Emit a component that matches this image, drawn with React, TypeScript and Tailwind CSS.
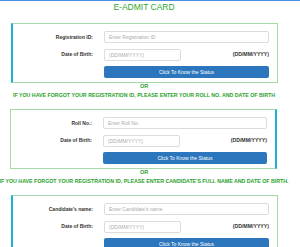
import React from 'react';

const font = { fontFamily: '"Liberation Sans", Arial, sans-serif' };

function Field({ placeholder, wide = true }: { placeholder: string; wide?: boolean }) {
  return (
    <input
      placeholder={placeholder}
      className={`${wide ? 'w-full' : 'w-[77px]'} block h-[12px] rounded-[2px] border border-[#dcdcdc] bg-white px-[4px] text-[5px] text-[#555] placeholder:text-[#aaa] outline-none`}
    />
  );
}

function Box({ label, placeholder, side }: { label: string; placeholder: string; side: 'left' | 'right' }) {
  const border =
    side === 'left'
      ? 'ml-[11px] border-l-2 border-l-[#1ab2d8]'
      : 'ml-[10px] border-r-2 border-r-[#1ab2d8]';
  const labelW = side === 'left' ? 'w-[80px]' : 'w-[81px]';
  return (
    <div className={`${border} w-[267px] border border-[#a8d9a8] pt-[7px] pb-[4px] pr-[8px] leading-[7px]`}>
      <div className="flex flex-col gap-[5.5px]">
        <div className="flex items-center">
          <div className={`${labelW} shrink-0 text-right text-[5px] font-bold text-[#333]`}>{label}</div>
          <div className="ml-[11px] flex flex-1"><Field placeholder={placeholder} /></div>
        </div>
        <div className="flex items-center">
          <div className={`${labelW} shrink-0 text-right text-[5px] font-bold text-[#333]`}>Date of Birth:</div>
          <div className="ml-[11px] flex flex-1 items-center justify-between">
            <Field placeholder="(DD/MM/YYYY)" wide={false} />
            <span className="text-[5.2px] font-bold text-[#333]">(DD/MM/YYYY)</span>
          </div>
        </div>
        <div className="flex">
          <div className={`${labelW} shrink-0`} />
          <button className="ml-[11px] block h-[12px] flex-1 rounded-[2px] bg-[#2b76bc] text-[5px] text-white">
            Click To Know the Status
          </button>
        </div>
      </div>
    </div>
  );
}

function Or({ text }: { text: string }) {
  return (
    <>
      <div className="text-center text-[5.5px] leading-[7px] font-bold text-[#2a9f2a]">OR</div>
      <div className="mt-[1.5px] flex justify-center whitespace-nowrap text-[5.28px] leading-[7px] font-bold text-[#2a9f2a]">
        {text}
      </div>
    </>
  );
}

export default function App() {
  return (
    <div style={font} className="min-h-[247px] w-[300px] overflow-hidden border-t border-[#4a8fdf] bg-white">
      <div className="w-[288px]">
        <h1 className="mt-[1px] text-center text-[8.5px] leading-[10px] text-[#2ea82e]">E-ADMIT CARD</h1>
        <div className="mt-[11px] flex">
          <Box label="Registration ID:" placeholder="Enter Registration ID" side="left" />
        </div>
        <Or text="IF YOU HAVE FORGOT YOUR REGISTRATION ID, PLEASE ENTER YOUR ROLL NO. AND DATE OF BIRTH" />
        <div className="mt-[10.5px] flex">
          <Box label="Roll No.:" placeholder="Enter Roll No." side="right" />
        </div>
        <Or text="IF YOU HAVE FORGOT YOUR REGISTRATION ID, PLEASE ENTER CANDIDATE'S FULL NAME AND DATE OF BIRTH." />
        <div className="mt-[10.5px] flex">
          <Box label="Candidate's name:" placeholder="Enter Candidate's name" side="left" />
        </div>
      </div>
    </div>
  );
}
